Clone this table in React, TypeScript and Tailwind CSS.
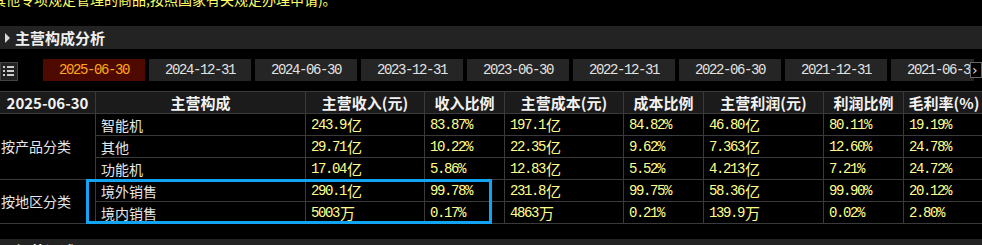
import React from "react";

const cjk = "font-['Noto_Sans_CJK_SC',sans-serif]";
const mono = "font-['Liberation_Mono','Noto_Sans_CJK_SC',monospace]";

const tabs = ["2025-06-30", "2024-12-31", "2024-06-30", "2023-12-31", "2023-06-30", "2022-12-31", "2022-06-30", "2021-12-31", "2021-06-30"];

const headers = ["2025-06-30", "主营构成", "主营收入(元)", "收入比例", "主营成本(元)", "成本比例", "主营利润(元)", "利润比例", "毛利率(%)"];

const groups = [
    {
        name: "按产品分类",
        rows: [
            ["智能机", "243.9亿", "83.87%", "197.1亿", "84.82%", "46.80亿", "80.11%", "19.19%"],
            ["其他", "29.71亿", "10.22%", "22.35亿", "9.62%", "7.363亿", "12.60%", "24.78%"],
            ["功能机", "17.04亿", "5.86%", "12.83亿", "5.52%", "4.213亿", "7.21%", "24.72%"],
        ],
    },
    {
        name: "按地区分类",
        rows: [
            ["境外销售", "290.1亿", "99.78%", "231.8亿", "99.75%", "58.36亿", "99.90%", "20.12%"],
            ["境内销售", "5003万", "0.17%", "4863万", "0.21%", "139.9万", "0.02%", "2.80%"],
        ],
    },
];

function Val({ v }: { v: string }) {
    const m = v.match(/^([\d.%]+)(.*)$/);
    const num = m ? m[1] : v;
    const unit = m ? m[2] : "";
    return (
        <>
            <span className={`${mono} text-[14px] tracking-[-1.4px]`}>{num}</span>
            {unit && <span className={`${cjk} text-[15px] ml-[1px]`}>{unit}</span>}
        </>
    );
}

function SectionBar({ title }: { title: string }) {
    return (
        <div className="h-[23px] bg-[#232323] flex items-center">
            <span className="ml-[5px] w-0 h-0 border-y-[5px] border-y-transparent border-l-[5px] border-l-[#d8d8d8]" />
            <span className={`${cjk} ml-[5px] text-[15px] font-bold text-[#f0f0f0] leading-none`}>{title}</span>
        </div>
    );
}

export default function App() {
    return (
        <div className="relative w-[982px] h-[245px] overflow-hidden bg-black">
            {/* clipped notice line */}
            <div className="h-[8px] overflow-hidden">
                <div className={`${cjk} -mt-[9px] -ml-[8px] whitespace-nowrap text-[14px] leading-[16px] text-[#ffff66]`}>
                    其他专项规定管理的商品,按照国家有关规定办理申请)。
                </div>
            </div>

            <div className="mt-[18px]">
                <SectionBar title="主营构成分析" />
            </div>

            {/* report date tabs */}
            <div className="mt-[10px] h-[22px] flex items-center">
                <div className="shrink-0 w-[18px] h-[19px] mt-[2px] border border-[#444] bg-[#222] flex flex-col justify-center gap-[2px] pl-[2px]">
                    {[0, 1, 2].map((i) => (
                        <div key={i} className="flex items-center gap-[2px]">
                            <span className="w-[2px] h-[2px] bg-[#cfcfcf]" />
                            <span className="w-[7px] h-[2px] bg-[#cfcfcf]" />
                        </div>
                    ))}
                </div>
                <div className="shrink-0 ml-[25px] flex gap-[4px] h-[22px] w-[931px] overflow-hidden">
                    {tabs.map((t, i) => (
                        <div
                            key={t}
                            className={`shrink-0 w-[102px] h-[22px] flex items-center justify-center ${mono} text-[14px] tracking-[-1.4px] ${i === 0 ? "bg-[#4e0a00] text-[#ffa81a]" : "bg-[#252525] text-[#e2e2e2]"}`}
                        >
                            {t}
                        </div>
                    ))}
                </div>
                <div className="shrink-0 -ml-[4px] w-[12px] h-[16px] border border-[#666] bg-black flex items-center pl-[1px] text-[14px] text-[#ddd] font-['DejaVu_Sans',sans-serif] leading-none overflow-hidden">
                    ›
                </div>
            </div>

            {/* table */}
            <div className="mt-[10px] w-[984px] grid grid-cols-[95px_209px_118px_79px_118px_79px_119px_79px_80px] auto-rows-[21px] gap-px bg-[#3a3a3a] border-y border-[#3a3a3a]">
                {headers.map((h) => (
                    <div key={h} className={`bg-[#1b1b1b] flex items-center justify-center ${cjk} text-[15px] font-bold text-[#f2f2f2] whitespace-nowrap leading-none`}>
                        {h}
                    </div>
                ))}
                {groups.map((g) => (
                    <React.Fragment key={g.name}>
                        <div
                            className={`bg-black flex items-center pl-px ${cjk} text-[14px] text-[#e6e6e6] ${g.rows.length === 3 ? "row-span-3" : "row-span-2"}`}
                        >
                            {g.name}
                        </div>
                        {g.rows.map((r) => (
                            <React.Fragment key={r[0]}>
                                {r.map((c, ci) => (
                                    <div
                                        key={ci}
                                        className={`bg-black flex items-center pl-[5px] whitespace-nowrap leading-none ${ci === 0 ? `col-start-2 ${cjk} text-[14px] text-[#e6e6e6]` : "text-[#ffff8c]"}`}
                                    >
                                        {ci === 0 ? c : <Val v={c} />}
                                    </div>
                                ))}
                            </React.Fragment>
                        ))}
                    </React.Fragment>
                ))}
            </div>

            <div className="mt-[15px]">
                <SectionBar title="经营评述" />
            </div>

            {/* highlight box */}
            <div className="absolute left-[86px] top-[179px] w-[406px] h-[45px] border-[3px] border-[#12a4f2]" />
        </div>
    );
}
